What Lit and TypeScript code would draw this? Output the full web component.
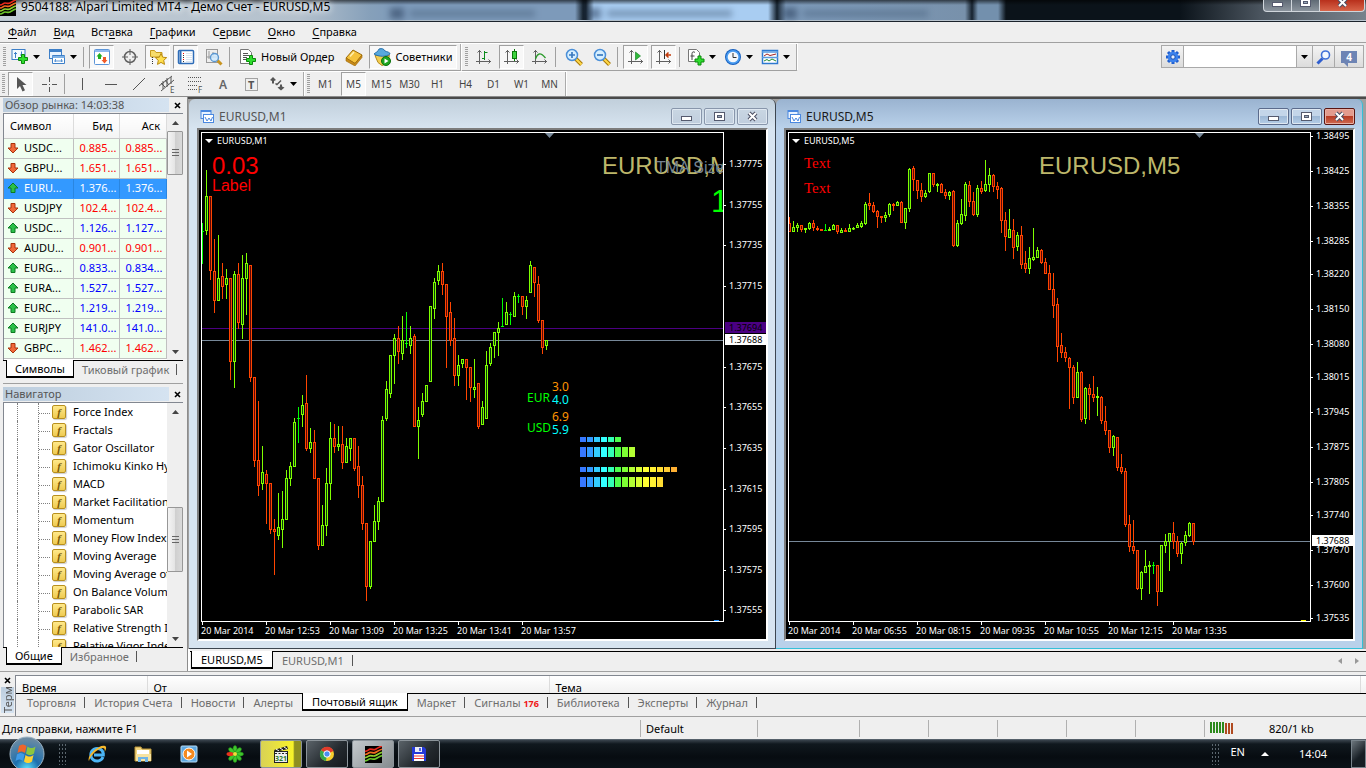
import { LitElement, html, svg, css } from "lit";
import { customElement, property } from "lit/decorators.js";
import { classMap } from "lit/directives/class-map.js";
import { styleMap } from "lit/directives/style-map.js";

/* [kind, high, body top, body bottom, low]; g = rising, r = falling, d = doji.
   Rows are measured from the top of the page frame, PANE_TOP is the pane's first row. */
type Candle = [string, number, number, number, number];
const PANE_TOP = 132;

const M1: Candle[] = [
  ["d",223,231,231,264],["g",170,196,231,235],["r",196,196,271,280],["r",239,271,301,313],["g",235,278,301,301],
  ["r",263,276,287,299],["g",269,278,285,299],["r",278,278,362,380],["g",271,274,362,388],["r",263,274,323,329],
  ["g",255,278,325,339],["g",253,263,279,315],["r",265,265,378,382],["r",377,377,461,467],["r",401,460,486,496],
  ["g",446,472,484,490],["r",470,474,484,524],["r",483,483,530,534],["r",519,529,532,575],["g",493,527,536,540],
  ["g",491,519,530,548],["g",470,478,520,520],["g",462,466,479,486],["g",418,422,467,467],["d",407,418,418,443],
  ["g",395,405,415,427],["r",375,403,449,451],["g",428,442,449,453],["r",430,442,479,479],["r",478,478,546,550],
  ["g",505,525,546,546],["g",468,483,526,536],["g",422,438,484,500],["r",424,438,447,453],["g",426,444,447,451],
  ["r",426,444,463,469],["g",438,446,463,463],["g",438,438,449,461],["r",438,438,469,471],["r",446,466,486,498],
  ["r",476,485,524,530],["r",523,523,587,601],["g",541,541,587,589],["g",505,521,542,542],["g",497,501,522,530],
  ["g",416,420,502,502],["g",381,389,419,421],["g",355,355,394,398],["g",334,338,356,384],["r",326,338,352,364],
  ["g",316,340,354,360],["d",312,343,343,348],["g",326,338,346,354],["r",334,336,427,427],["g",407,420,427,459],
  ["g",393,401,415,417],["g",385,385,402,402],["g",306,306,382,382],["g",278,282,309,319],["g",265,271,281,285],
  ["r",263,271,285,295],["r",284,284,317,368],["r",302,312,341,346],["r",318,338,376,386],["g",355,365,376,386],
  ["g",359,359,364,368],["r",359,359,368,400],["r",367,367,388,402],["g",359,387,390,398],["r",383,383,427,429],
  ["g",401,407,425,425],["g",351,365,419,419],["g",343,347,364,366],["g",332,332,346,358],["g",322,328,333,356],
  ["d",298,326,326,327],["g",302,312,325,325],["d",312,314,314,325],["g",292,296,317,317],["d",294,296,296,303],
  ["r",296,296,307,315],["g",296,300,307,319],["g",261,265,293,293],["r",267,267,283,297],["r",276,284,321,323],
  ["r",320,320,348,354],["g",340,340,346,350],
];

const M5: Candle[] = [
  ["r",217,223,232,232],["g",221,227,232,232],["g",223,225,228,232],["r",225,225,230,232],["g",228,228,230,233],
  ["g",222,223,229,230],["r",220,223,228,231],["r",226,228,230,231],["r",229,229,231,231],["d",224,230,230,231],
  ["g",227,229,231,231],["g",224,225,230,230],["r",225,225,232,234],["g",228,230,233,233],["r",228,230,232,232],
  ["g",224,228,232,232],["g",227,228,229,230],["g",223,225,228,228],["g",221,223,227,228],["g",202,204,224,225],
  ["r",193,203,206,210],["r",202,205,212,213],["r",210,211,217,228],["r",216,216,218,223],["g",212,215,218,222],
  ["g",203,204,215,217],["r",203,204,206,211],["g",201,202,206,206],["r",201,202,223,223],["g",208,208,223,229],
  ["g",168,169,209,212],["r",166,168,180,191],["r",180,180,191,199],["r",183,190,197,202],["g",190,193,197,198],
  ["g",173,173,192,193],["r",173,173,185,187],["g",183,184,186,192],["r",183,184,193,193],["r",189,192,196,199],
  ["g",191,192,196,200],["r",190,191,246,247],["g",220,223,246,247],["g",199,214,224,225],["g",182,184,216,221],
  ["r",181,185,202,207],["r",192,201,215,216],["g",185,188,215,217],["r",181,188,192,194],["g",160,184,191,192],
  ["g",168,175,185,192],["r",174,175,187,192],["r",182,186,190,199],["r",187,188,221,233],["r",212,220,237,251],
  ["g",209,229,238,238],["r",219,230,248,259],["g",232,235,247,251],["r",226,235,265,269],["r",251,263,269,273],
  ["g",247,258,269,274],["g",228,257,260,261],["g",247,250,258,258],["r",249,250,263,264],["r",258,262,274,274],
  ["r",265,273,290,290],["r",273,289,306,318],["r",298,304,347,362],["r",333,345,353,358],["r",347,352,358,362],
  ["r",357,358,368,409],["r",365,367,398,404],["g",362,372,398,398],["r",371,372,420,422],["g",387,388,419,424],
  ["r",384,388,395,420],["r",376,394,398,402],["g",387,396,398,416],["r",396,397,421,424],["r",406,421,431,435],
  ["r",430,430,448,453],["g",435,436,448,456],["r",437,437,468,471],["r",454,467,472,474],["r",468,471,525,527],
  ["r",515,524,547,552],["r",520,546,551,554],["r",550,550,589,590],["g",571,572,589,600],["g",550,566,573,573],
  ["g",561,565,567,594],["d",562,565,565,574],["r",565,565,592,606],["g",545,545,592,592],["g",534,541,546,553],
  ["g",533,533,542,571],["r",522,533,542,549],["r",536,541,554,557],["g",542,543,554,564],["g",531,535,543,546],
  ["g",522,523,536,537],["r",523,523,542,545],
];

const RAMP = ["#3778ff","#3399ff","#33ccff","#33ffff","#33ffb4","#4dff4d","#7dff33","#b4ff33","#d8ff33","#ffff33","#fff033","#ffdd33","#ffcc33","#ffb033"];

/* ---------- glyphs ---------- */
const icon = (body: unknown, w = 18, h = 18) =>
  html`<svg class="ico" width=${w} height=${h} viewBox="0 0 ${w} ${h}" aria-hidden="true">${body}</svg>`;
const plus = (x: number, y: number) => svg`<path transform="translate(${x} ${y})" d="M3.5 .5h3v3h3v3h-3v3h-3v-3h-3v-3h3z" fill="#2fdc2f" stroke="#0a8a0a"/>`;
const axes = svg`<path d="M4.500 2v14M1 13.500h15M2.500 4.500l2-2 2 2M13.500 11.500l2 2-2 2" fill="none" stroke="#606060"/>`;
const glass = svg`<path d="M10.500 10.500l6 6" stroke="#a87808" stroke-width="4"/><path d="M10.500 10.500l6 6" stroke="#ffd94a" stroke-width="2"/><circle cx="7" cy="7" r="5.500" fill="#d6efff" stroke="#4a8fd8" stroke-width="1.500"/>`;
const ICONS: Record<string, unknown> = {
  newChart: icon(svg`<rect x="1" y="1.500" width="13" height="10" fill="#f4faff" stroke="#3d7fc8"/><path d="M4.500 4v6M3 5.500h3M10.500 3.500v5M9 7h3" stroke="#3d7fc8"/>${plus(7,6)}`),
  profiles: icon(svg`<rect x="1.500" y="1.500" width="12" height="9" fill="#e8f3ff" stroke="#3d7fc8"/><path d="M1.500 3h12" stroke="#3d7fc8" stroke-width="2"/><path d="M4.500 7.500h12v8h-12z" fill="#fff" stroke="#3d7fc8"/><path d="M4.500 9h12" stroke="#7fb2e6" stroke-width="2"/><path d="M7.500 11v3M13.500 11v3M6 13h9" stroke="#5c97d6"/>`),
  market: icon(svg`<rect x="1.500" y="1.500" width="15" height="15" rx="1" fill="#fff" stroke="#5c95d8"/><path d="M2 3h14" stroke="#8fbaf0" stroke-width="2"/><path d="M6.500 5l3 3.500H8V11H5V8.500H3.500z" fill="#1fae1f"/><path d="M11.500 15.500l3-3.500H13V9h-3v3H8.500z" fill="#f05a28"/>`),
  target: icon(svg`<g fill="none" stroke="#606060"><circle cx="9" cy="9" r="5.500" stroke-width="1.500"/><path d="M9 1v6M9 11v6M1 9h6M11 9h6" /></g>`),
  star: icon(svg`<path d="M1.500 8V2.500h4l1.500 2h6V9h-11z" fill="#f7dc6a" stroke="#c79a1c"/><path d="M3.500 9v7" stroke="#333" stroke-dasharray="1 1"/><path d="M12 5.500l1.700 3.700 4 .4-3 2.800.8 4-3.500-2-3.500 2 .8-4-3-2.800 4-.4z" fill="#ffdf4d" stroke="#b98a10"/>`),
  terminal: icon(svg`<rect x="1.500" y="2.500" width="15" height="13" rx="1" fill="#fff" stroke="#2d6cb8" stroke-width="1.500"/><path d="M3.500 3v12" stroke="#2d6cb8" stroke-width="2"/><path d="M6 5.500h1M6 11.500h1" stroke="red" stroke-width="1"/><path d="M6 7.500h1M6 9.500h1M6 13.500h1" stroke="#333"/><path d="M9 5.500h6M9 7.500h6M9 9.500h6M9 11.500h6M9 13.500h6" stroke="#dbe6f2"/>`),
  tester: icon(svg`<rect x="1.500" y="1.500" width="11" height="13" fill="#eee" stroke="#999"/><path d="M4 3v8M8 4v6M2 9h10" stroke="#999"/><path d="M12 12l4.500 4.500" stroke="#c89420" stroke-width="3"/><circle cx="9.500" cy="9.500" r="4" fill="#cfeaff" fill-opacity=".85" stroke="#5a96d0" stroke-width="1.300"/>`),
  order: icon(svg`<path d="M2.500 1.500h8l3 3v11h-11z" fill="#fff" stroke="#777"/><path d="M5 5.500h5M5 7.500h6M5 9.500h4M5 11.500h3" stroke="#555"/>${plus(8,7)}`),
  book: icon(svg`<path d="M1 10l7-8 9 5-7 8.500z" fill="#f5c23c" stroke="#9c6a08"/><path d="M1 10l9 5.500 7-8.500v2.500L10 18l-9-5z" fill="#c98a17" stroke="#9c6a08" stroke-width=".6"/><path d="M5 8.500l4-4.500" stroke="#fff0b0" stroke-width="1.500"/>`),
  experts: icon(svg`<path d="M2 7.500l3 7 4 3 5-2 2.500-8z" fill="#f4cd50" stroke="#b28a1c"/><path d="M1 6c2-2 4-2 5-5 3-1 5 0 6 2 2 1 5 1 5 3-4 3-11 3-16 0z" fill="#58a8dc" stroke="#2a72ac"/><circle cx="13" cy="13" r="4.500" fill="#1ea51e" stroke="#0c700c"/><path d="M11.500 10.500v5l4-2.500z" fill="#fff"/>`),
  bars: icon(svg`${axes}<path d="M9.500 3v9M9.500 4.500h3M7 10.500h2.500" stroke="#0a8a1a" fill="none"/>`),
  candles: icon(svg`${axes}<path d="M11.500 1v12" stroke="#0a7a0a"/><rect x="9.500" y="3.500" width="4" height="7" fill="#3ed43e" stroke="#0a7a0a"/>`),
  line: icon(svg`${axes}<path d="M4.500 11c2-6 5-7 10-1" fill="none" stroke="#2a9a2a" stroke-width="1.300"/>`),
  zoomIn: icon(svg`${glass}<path d="M4 7h6M7 4v6" stroke="#3a7ac0" stroke-width="1.700"/>`),
  zoomOut: icon(svg`${glass}<path d="M4 7h6" stroke="#3a7ac0" stroke-width="1.700"/>`),
  scroll: icon(svg`${axes}<path d="M8.500 4v8l5-4z" fill="#2fb83a" stroke="#0a7a1a" stroke-width=".6"/>`),
  shift: icon(svg`${axes}<path d="M9.500 2v9" stroke="#333"/><path d="M11 7h5M13.500 4.500L11 7l2.500 2.500" fill="none" stroke="#c23a0a" stroke-width="1.500"/>`),
  indicators: icon(svg`<path d="M1.500 1.500h8l3 3v9h-11z" fill="#fff" stroke="#777"/><path d="M5 12V5.500c0-2 2-2 3-1M3.500 8h4" stroke="#444" fill="none"/>${plus(7.500,7.500)}`),
  clock: icon(svg`<circle cx="9" cy="9" r="8" fill="#1660c0"/><circle cx="9" cy="9" r="7" fill="#4a9cf0"/><circle cx="9" cy="9" r="5.300" fill="#f4f8fc"/><path d="M9 5v4.500h3.500" fill="none" stroke="#333"/>`),
  template: icon(svg`<rect x="1.500" y="2.500" width="15" height="13" fill="#fff" stroke="#2d78d0" stroke-width="1.500"/><path d="M1 4h16M1 9.500h16" stroke="#5a9ae0" stroke-width="1.500"/><path d="M3 8l3-2 3 1.500L15 6" stroke="#a02020" fill="none"/><path d="M3 13l3-1.500 2 1.500 3-2 4 2" stroke="#208a30" fill="none"/>`),
  cursor: icon(svg`<path d="M5 2v12l3-3 2.500 5.500 2.500-1.200-2.500-5.300h4z" fill="#555"/>`),
  cross: icon(svg`<path d="M9.500 2v5M9.500 12v5M2 9.500h5M12 9.500h5M9.500 9v1" stroke="#555"/>`),
  vline: icon(svg`<path d="M8.500 3v12" stroke="#555"/>`),
  hline: icon(svg`<path d="M3 9.500h12" stroke="#555"/>`),
  trend: icon(svg`<path d="M3 15L15 3" stroke="#555"/>`),
  channel: icon(svg`<path d="M1 11L14 1M3 16L16 5M5 6v8M9 3v9M13 2v7M3 8l4 4M7 5l4 5" stroke="#555" fill="none"/><text x="12" y="18" font-size="8" fill="#555">E</text>`),
  fibo: icon(svg`<path d="M2 2.500h14M2 6.500h14M2 10.500h9M2 14.500h9" stroke="#555" stroke-dasharray="1 1"/><text x="12" y="18" font-size="8" fill="#555">F</text>`),
  textA: icon(svg`<text x="5" y="14" font-size="12" font-weight="600" fill="#666">A</text>`),
  textT: icon(svg`<rect x="3.500" y="3.500" width="12" height="12" fill="none" stroke="#555" stroke-dasharray="1 1"/><text x="6" y="14" font-size="11" font-weight="700" fill="#555">T</text>`),
  arrows: icon(svg`<path d="M5 2l3 3-2 1v2.500H4V6L2 5zM7 9l2 1.500L13.500 6l-1-1L9 8.500 8 8z" fill="#555"/><path d="M13 15.500l-3.500-3 2.500-1V9.500h2v2l2.500 1z" fill="#555"/>`),
  gear: icon(svg`<g stroke="#1f5fd0" stroke-width="3"><path d="M9 2v14M2 9h14M4 4l10 10M14 4L4 14"/></g><circle cx="9" cy="9" r="5.200" fill="#3b82ee"/><circle cx="9" cy="9" r="2.200" fill="#e8f1ff" stroke="#174db0"/>`, 18, 18),
  find: icon(svg`<path d="M1.500 14.500l5-5" stroke="#2f5fd0" stroke-width="3"/><circle cx="9.500" cy="6" r="4" fill="#f2f7ff" stroke="#3f6fd8" stroke-width="1.600"/>`, 16, 16),
  chart: icon(svg`<rect x="1" y="1.500" width="10" height="8" fill="#e8f2ff" stroke="#4a88e0"/><path d="M1 2h10" stroke="#4a88e0" stroke-width="2"/><rect x="3.500" y="5.500" width="10" height="8" fill="#fff" stroke="#4a88e0"/><path d="M5 8l2 4 2-3 2 3 1.500-4" stroke="#4a88e0" fill="none"/>`, 15, 15),
  min: icon(svg`<rect x=".5" y="5.500" width="10" height="4" fill="#fff" stroke="#555a6e"/>`, 11, 11),
  max: icon(svg`<rect x=".5" y="1.500" width="10" height="8" fill="#fff" stroke="#555a6e"/><rect x="3.500" y="4.500" width="4" height="2" fill="#9ab" stroke="#555a6e"/>`, 11, 11),
  close: icon(svg`<path d="M2 2l7 7M9 2L2 9" stroke="#4b4f63" stroke-width="4"/><path d="M2 2l7 7M9 2L2 9" stroke="#fff" stroke-width="2"/>`, 11, 11),
  x: icon(svg`<path d="M1 1l5 5M6 1L1 6" stroke="#000" stroke-width="1.600"/>`, 7, 7),
};
const caret = html`<svg class="caret" width="7" height="4" viewBox="0 0 7 4"><path d="M0 0h7L3.500 4z" fill="#000"/></svg>`;
const dir = (up: boolean) => html`<svg width="12" height="12" viewBox="0 0 12 12"><path transform=${up ? "" : "rotate(180 6 6)"} d="M6 1l5 5H8v4.500H4V6H1z" fill=${up ? "#2bc04a" : "#f0693a"} stroke=${up ? "#0c7a22" : "#a8330c"}/></svg>`;
const alpari = (s: number) => html`<svg width=${s} height=${s} viewBox="0 0 16 16"><rect width="16" height="16" fill="#000"/><g fill="none" stroke-width="1.600"><path d="M0 5c3 0 3-2 5-2s3 1 5 0 3-2 6-3" stroke="#e8281c"/><path d="M0 8c3 0 3-2 5-2s3 1 5 0 3-2 6-3" stroke="#f06a1e"/><path d="M0 11c3 0 3-2 5-2s3 1 5 0 3-2 6-3" stroke="#8ed02c"/><path d="M0 14c3 0 3-2 5-2s3 1 5 0 3-2 6-3" stroke="#6cc72a"/></g></svg>`;

const shared = css`
  :host { box-sizing: border-box; }
  *, *::before, *::after { box-sizing: border-box; }
  button, input { font: inherit; color: inherit; margin: 0; padding: 0; border: 0; background: none; border-radius: 0; outline: 0; }
  svg { display: block; flex: none; }
  a { color: inherit; text-decoration: none; }
`;

const bar = css`
  .sheets { display: flex; align-items: flex-start; border-top: 1px solid #000; white-space: nowrap; }
  .sheet { height: 17px; line-height: 17px; padding: 0 9px; color: #6d6d6d; position: relative; }
  .sheet::after { content: ""; position: absolute; right: 0; top: 3px; height: 11px; width: 1px; background: #555; }
  .sheet.on { background: #fff; color: #000; border: 1px solid #000; height: 18px; margin-top: -1px; border-width: 0 1px 2px 1px; }
  .sheet.on::after, .sheet.quiet::after { display: none; }
  .sheet b { color: #f01414; font-size: 9px; line-height: 9px; }
`;

@customElement("mt-scrollbar")
class MtScrollbar extends LitElement {
  @property({ type: Number }) before = 1;
  @property({ type: Number }) after = 1;
  @property({ type: Number }) size = 40;
  static styles = [shared, css`
    :host { display: flex; flex-direction: column; width: 16px; background: #efefef; }
    .end { height: 17px; display: grid; place-items: center; }
    .thumb { border: 1px solid #979797; border-radius: 1px; background: linear-gradient(90deg, #f4f4f4, #e4e4e4 50%, #cfcfcf 51%, #dadada); display: grid; place-items: center; }
  `];
  render() {
    return html`
      <button class="end" aria-label="Вверх"><svg width="7" height="4"><path d="M0 4h7L3.500 0z" fill="#444"/></svg></button>
      <div style=${styleMap({ flexGrow: String(this.before) })}></div>
      <div class="thumb" style=${styleMap({ height: this.size + "px" })}><svg width="7" height="8"><path d="M0 .5h7M0 3.500h7M0 6.500h7" stroke="#666"/></svg></div>
      <div style=${styleMap({ flexGrow: String(this.after) })}></div>
      <button class="end" aria-label="Вниз"><svg width="7" height="4"><path d="M0 0h7L3.500 4z" fill="#444"/></svg></button>`;
  }
}

@customElement("mt-chart")
class MtChart extends LitElement {
  @property() name = "";
  @property({ type: Boolean }) active = false;
  @property({ attribute: false }) candles: Candle[] = [];
  @property({ attribute: false }) prices: [string, number][] = [];
  @property({ attribute: false }) times: string[] = [];
  @property({ attribute: false }) lines: [number, string, string, string, string][] = [];
  @property({ type: Number }) marker = 0;
  @property({ attribute: false }) overlay: unknown = null;
  static styles = [shared, css`
    :host { display: flex; flex-direction: column; flex: 1 1 0; min-width: 0; padding: 0 7px 7px 8px; border-radius: 6px 6px 0 0; border: 1px solid #3d4650; border-width: 0 1px 1px 0; background: linear-gradient(#c1cfdb, #d7e4f0 29px); }
    :host([active]) { background: linear-gradient(#9ab3d0, #b9d1ea 29px); border-color: #35c0d8; }
    .head { height: 29px; display: flex; align-items: center; gap: 4px; padding: 6px 0 0 3px; flex: none; color: #555; }
    :host([active]) .head { color: #1a1a1a; }
    .head h2 { font: inherit; margin: 0; flex: 1; }
    .ctl { display: flex; gap: 2px; }
    .ctl button { width: 31px; height: 17px; border: 1px solid #8896ab; border-radius: 2px; display: grid; place-items: center; background: linear-gradient(#c9d6e3, #c0cedd); box-shadow: inset 0 0 0 1px #dfe8f1; }
    :host([active]) .ctl button { border-color: #5b6b8c; background: linear-gradient(#c3d5e9 50%, #9db8d6 50%, #b5cde6); }
    :host([active]) .ctl button.x { border-color: #5a1512; background: linear-gradient(#e39b8e 45%, #b93c25 50%, #cf6a50); box-shadow: inset 0 0 0 1px #e8b0a4; }
    .client { flex: 1; min-height: 0; border: 2px solid; border-color: #7d7d7d #fff #fff #7d7d7d; background: #000; display: grid; grid-template: 1fr 17px / 1fr 42px; padding: 2px 0 0 2px; font-size: 9px; color: #fff; }
    .plot { border: 1px solid #fff; overflow: hidden; min-width: 0; min-height: 0; }
    .client svg { width: 100%; height: 100%; }
    .axis, .time, .plot { display: grid; min-width: 0; min-height: 0; }
    .axis svg, .time svg { overflow: visible; }
    .time { grid-column: 1 / 3; }
    text { fill: #fff; }
    .g { stroke: #7fff00; fill: #0a3c0a; }
    .r { stroke: #ff4500; fill: #5a0808; }
    .d { stroke: #00ff00; fill: none; }
  `];
  private candle([kind, high, top, bottom, low]: Candle, i: number) {
    const x = i * 4 + 0.5, at = (v: number) => v - PANE_TOP - 1;
    if (kind === "d") return svg`<path class="d" d="M${x} ${at(high)}V${at(low)}M${x - 1.5} ${at(top) + 0.5}h3"/>`;
    return svg`<path class=${kind} d="M${x} ${at(high)}V${at(top)}M${x} ${at(bottom)}V${at(low)}"/>
      <rect class=${kind} x=${x - 1} y=${at(top) + 0.5} width="2" height=${Math.max(0.5, bottom - top - 1)}/>`;
  }
  render() {
    return html`
      <header class="head">${ICONS.chart}<h2>${this.name}</h2>
        <div class="ctl">
          <button aria-label="Свернуть">${ICONS.min}</button>
          <button aria-label="Развернуть">${ICONS.max}</button>
          <button class="x" aria-label="Закрыть">${ICONS.close}</button>
        </div>
      </header>
      <div class="client">
        <div class="plot"><svg>
          ${this.lines.map(([y, c]) => svg`<path d="M0 ${y - PANE_TOP - 0.5}h3000" stroke=${c}/>`)}
          ${this.candles.map((c, i) => this.candle(c, i))}
          <path d="M3 6h8l-4 4z" fill="#fff"/>
          <text x="15" y="11" font-size="9">${this.name}</text>
          <path d="M${this.marker} 0h9l-4.500 5z" fill="#778899"/>
          ${this.overlay}
        </svg></div>
        <div class="axis"><svg>
          ${this.prices.map(([t, y]) => svg`<path d="M0 ${y - PANE_TOP + 0.5}h2" stroke="#fff"/><text x="5" y=${y - PANE_TOP + 3}>${t}</text>`)}
          ${this.lines.map(([y, , bg, fg, t]) => svg`<rect y=${y - PANE_TOP - 6} x="1" width="41" height="11" fill=${bg}/><text x="5" y=${y - PANE_TOP + 3} style="fill:${fg}">${t}</text>`)}
        </svg></div>
        <div class="time"><svg>
          ${this.times.map((t, i) => svg`<path d="M${1.5 + i * 64} 0v3" stroke="#fff"/><text x=${i * 64} y="12">${t}</text>`)}
        </svg></div>
      </div>`;
  }
}

const meter = (x: number, y: number, h: number, n: number) =>
  RAMP.slice(0, n).map((c, i) => svg`<rect x=${x + i * 7} y=${y} width="6" height=${h} fill=${c}/>`);

const overlayM1 = svg`
  <text x="10" y="41" font-family="Liberation Sans" font-size="24" style="fill:#f00">0.03</text>
  <text x="10" y="58" font-family="Liberation Sans" font-size="16" style="fill:#f00">Label</text>
  <text x="400" y="41" font-family="Liberation Sans" font-size="24" style="fill:#bdb76b">EURUSD,M1</text>
  <text x="454" y="40" font-family="Liberation Sans" font-size="16" style="fill:#708090">TMA Size</text>
  <text x="509" y="79" font-family="Liberation Sans" font-size="32" style="fill:#0f0">1</text>
  <text x="325" y="269" font-size="12" style="fill:#0f0">EUR</text><text x="350" y="258" font-size="12" style="fill:#ff9500">3.0</text><text x="350" y="271" font-size="12" style="fill:#0ff">4.0</text>
  <text x="325" y="299" font-size="12" style="fill:#0f0">USD</text><text x="350" y="288" font-size="12" style="fill:#ff9500">6.9</text><text x="350" y="301" font-size="12" style="fill:#0ff">5.9</text>
  ${meter(378, 304, 5, 6)}${meter(378, 314, 10, 8)}${meter(378, 334, 5, 14)}${meter(378, 344, 10, 12)}
  <path d="M512 487.500h5" stroke="#1e90ff"/>`;
const overlayM5 = svg`
  <text x="15" y="35" font-family="Liberation Serif" font-size="15" style="fill:#f00">Text</text>
  <text x="15" y="60" font-family="Liberation Serif" font-size="15" style="fill:#f00">Text</text>
  <text x="250" y="41" font-family="Liberation Sans" font-size="24" style="fill:#bdb76b">EURUSD,M5</text>
  <path d="M512 487.500h5" stroke="#ff0"/>`;

const QUOTES: [string, string, string, boolean][] = [
  ["USDC...", "0.885...", "0.885...", false], ["GBPU...", "1.651...", "1.651...", false], ["EURU...", "1.376...", "1.376...", true],
  ["USDJPY", "102.4...", "102.4...", false], ["USDC...", "1.126...", "1.127...", true], ["AUDU...", "0.901...", "0.901...", false],
  ["EURG...", "0.833...", "0.834...", true], ["EURA...", "1.527...", "1.527...", true], ["EURC...", "1.219...", "1.219...", true],
  ["EURJPY", "141.0...", "141.0...", true], ["GBPC...", "1.462...", "1.462...", false],
];
const TREE = ["Force Index", "Fractals", "Gator Oscillator", "Ichimoku Kinko Hyo", "MACD", "Market Facilitation Index", "Momentum",
  "Money Flow Index", "Moving Average", "Moving Average of Oscillator", "On Balance Volume", "Parabolic SAR", "Relative Strength Index", "Relative Vigor Index"];
const zip = (labels: string[], ys: number[]): [string, number][] => labels.map((l, i) => [l, ys[i]]);
const P1 = zip(["1.37775","1.37755","1.37735","1.37715","1.37675","1.37655","1.37635","1.37615","1.37595","1.37575","1.37555"],
  [164,205,245,286,367,407,448,489,529,570,610]);
const P5 = zip(["1.38495","1.38425","1.38355","1.38285","1.38220","1.38150","1.38080","1.38015","1.37945","1.37875","1.37805","1.37740","1.37670","1.37600","1.37535"],
  [136,171,206,241,274,309,344,377,412,447,482,515,550,585,618]);
const T1 = ["20 Mar 2014","20 Mar 12:53","20 Mar 13:09","20 Mar 13:25","20 Mar 13:41","20 Mar 13:57"];
const T5 = ["20 Mar 2014","20 Mar 06:55","20 Mar 08:15","20 Mar 09:35","20 Mar 10:55","20 Mar 12:15","20 Mar 13:35"];

@customElement("app-root")
class AppRoot extends LitElement {
  static styles = [shared, bar, css`
    :host { display: flex; flex-direction: column; height: 100vh; overflow: hidden; background: #efefef; color: #000; font: 11px/14px "Noto Sans", "Open Sans", sans-serif; }
    mt-chart { font-size: 12px; }

    .title { height: 22px; flex: none; display: flex; align-items: flex-start; position: relative; border-bottom: 1px solid #1b232c; box-shadow: inset 0 -1px #b9c4ce; overflow: hidden;
      background: linear-gradient(#0009, #0000 5px), linear-gradient(90deg, #c3cdd6 0, #b4c1cd 300px, #86a0ba 370px, #7d9aba 400px, #7d9aba 575px, #16222e 583px, #16222e 586px, #a9cdf2 594px, #a9cdf2 768px, #16222e 777px, #7d9aba 786px, #7891ab 965px, #16222e 972px, #7390ad 978px, #7390ad 998px, #0b131a 1006px, #0b131a 1180px, #4a545e 1260px, #78828c 100%); }
    .ghosts { position: absolute; left: 390px; top: 8px; width: 590px; display: flex; justify-content: space-between; filter: blur(3px); opacity: .5; }
    .ghosts i { width: 14px; height: 11px; background: #1f3350; margin-right: 6px; }
    .ghosts span { width: 125px; height: 7px; margin: 2px auto 0 0; background: #4a6480; }
    .title h1 { font: 12px/14px "Noto Sans", sans-serif; margin: 0; padding-left: 5px; flex: 1; text-shadow: 0 0 6px #fff, 0 0 8px #fff; white-space: nowrap; position: relative; }
    .wctl { display: flex; margin-right: 1px; position: relative; }
    .wctl button { height: 12px; width: 29px; border: 1px solid #d0d6dc; border-top: 0; background: linear-gradient(#5f6a75, #8b949d); display: flex; align-items: flex-end; justify-content: center; padding-bottom: 3px; margin-left: -1px; overflow: hidden; }
    .wctl button:first-child { border-radius: 0 0 0 4px; }
    .wctl .x { width: 46px; background: linear-gradient(#b8301c, #d8654a); border-radius: 0 0 4px 0; }

    .menu { height: 21px; flex: none; display: flex; gap: 17px; align-items: center; padding-left: 8px; border-bottom: 1px solid #a0a0a0; }
    .menu u { text-underline-offset: 2px; }
    .bars { display: flex; flex: none; }
    .bars.one { height: 28px; }
    .bars.two { height: 26px; border-bottom: 1px solid #8c8c8c; }
    .group { display: flex; padding: 1px 0 0 3px; border-right: 2px groove #fff; border-bottom: 1px solid #a0a0a0; border-top: 1px solid #fff; height: 28px; }
    .two .group { border-bottom: 0; height: 25px; padding: 0 0 0 2px; }
    .grip { width: 3px; height: 20px; margin: 2px 3px 0 0; background: repeating-linear-gradient(#a0a0a0 0 1px, #efefef 1px 2px); }
    .b { width: 25px; height: 24px; margin-right: 3px; display: flex; align-items: center; justify-content: center; white-space: nowrap; }
    .on.b { background: #f8f8f8; border: 1px solid; border-color: #a0a0a0 #fff #fff #a0a0a0; }
    .b.drop { width: 34px; gap: 4px; justify-content: flex-start; padding-left: 2px; }
    .b.order { width: 103px; justify-content: flex-start; gap: 5px; padding-left: 3px; }
    .b.ea { width: 88px; gap: 4px; }
    .b.tf { color: #444; font-size: 10px; }
    .rule { width: 2px; height: 20px; border-left: 1px solid #a0a0a0; margin: 2px 4px 0 0; }
    .grow { flex: 1; }
    .seek { display: flex; height: 23px; margin: 2px 2px 0 0; border: 1px solid #a9a9a9; background: #a9a9a9; gap: 1px; }
    .seek > button { background: linear-gradient(#f4f4f4, #dcdcdc); display: grid; place-items: center; width: 21px; }
    .seek input { width: 112px; background: #fff; padding: 0 3px; }
    .seek .dd { width: 15px; }
    .seek .chat { width: 28px; }
    .bubble { background: #6d84b4; color: #fff; font-weight: 700; font-size: 10px; line-height: 12px; width: 16px; height: 12px; position: relative; }
    .bubble::after { content: ""; position: absolute; left: 3px; top: 12px; border: 2px solid #0000; border-top-color: #6d84b4; border-right-color: #6d84b4; }

    .main { flex: 1; min-height: 0; display: flex; }
    .dock { width: 188px; flex: none; display: flex; flex-direction: column; border-right: 1px solid #8c8c8c; padding: 0 4px 0 3px; }
    .panel { display: flex; flex-direction: column; min-height: 0; border-bottom: 1px solid #a0a0a0; padding-bottom: 5px; }
    .panel.nav { flex: 1; padding: 2px 0 6px; border-bottom: 0; }
    .cap { height: 16px; display: flex; align-items: center; flex: none; color: #555; }
    .cap h3 { font: inherit; margin: 0; width: 166px; line-height: 14px; padding-left: 2px; background: linear-gradient(90deg, #bccddd, #d5e3f1); }
    .cap button { width: 11px; height: 11px; margin-left: auto; display: grid; place-items: center; }
    .view { display: flex; border: 1px solid #828790; border-width: 1px 0 0 1px; background: #fff; overflow: hidden; }
    .view mt-scrollbar { flex: none; }
    .market .view { height: 247px; }
    .quotes { flex: 1; border-collapse: collapse; table-layout: fixed; width: 163px; min-width: 0; align-self: flex-start; }
    .quotes th { height: 24px; font-weight: 400; text-align: right; padding: 0 6px; border-right: 1px solid #dcdcdc; background: linear-gradient(#fff, #f4f4f4); border-bottom: 1px solid #c8c8c8; }
    .quotes th:first-child { text-align: left; width: 69px; }
    .quotes th:nth-child(2) { width: 46px; }
    .quotes td { height: 20px; padding: 0 0 0 6px; border-right: 1px solid #c0c0c0; border-bottom: 1px solid #c0c0c0; background: #f0fff0; white-space: nowrap; overflow: hidden; line-height: 14px; }
    .quotes .sym { display: flex; align-items: center; gap: 5px; margin-left: -3px; }
    .quotes .up { color: #00f; }
    .quotes .down { color: #f00; }
    .quotes .sel td { background: #3399ff; color: #fff; border-color: #c0c0c0 #2a86e0 #3399ff; }
    .nav .view { flex: 1; min-height: 0; }
    .tree { flex: 1; min-width: 0; margin: 0; padding: 0 0 0 13px; list-style: none; overflow: hidden; }
    .tree li { height: 18px; display: flex; align-items: center; border-left: 1px dotted #808080; white-space: nowrap; padding-left: 20px; }
    .tree li::before { content: ""; width: 12px; height: 18px; flex: none; border-left: 1px dotted #808080; background: repeating-linear-gradient(90deg, #808080 0 1px, #0000 1px 2px) 0 10px / 100% 1px no-repeat; margin-right: 2px; }
    .fn { width: 14px; height: 14px; margin-right: 7px; border: 1px solid #b8901e; border-radius: 2px; background: linear-gradient(#ffe98a, #eecb52); box-shadow: 1px 1px 1px #0003; display: grid; place-items: center; font: italic 700 11px/11px "Liberation Serif", serif; color: #7a5a08; flex: none; }
    .dock .sheets { padding-left: 3px; }
    .dock .sheet { padding: 0 8px; }

    .work { flex: 1; min-width: 0; display: flex; flex-direction: column; }
    .desk { flex: 1; min-height: 0; display: flex; padding: 0 3px 0 1px; background: #a0a0a0; border-top: 2px solid #4a4a4a; }
    .docs { height: 22px; flex: none; display: flex; flex-direction: column; padding-top: 2px; background: #efefef; border-left: 2px solid #fff; position: relative; }
    .docs .sheets { padding-left: 1px; }
    .docs nav { position: absolute; right: 7px; top: 9px; display: flex; gap: 13px; }

    .term { height: 46px; flex: none; display: grid; grid-template-columns: 15px 1fr; border-top: 1px solid #a0a0a0; border-bottom: 1px solid #a0a0a0; padding-top: 3px; overflow: hidden; }
    .spine { display: flex; flex-direction: column; align-items: center; gap: 3px; padding-top: 2px; overflow: hidden; color: #555; min-height: 0; }
    .spine span { writing-mode: vertical-rl; transform: rotate(180deg); background: linear-gradient(#d5e3f1, #bccddd); width: 13px; line-height: 13px; height: 26px; overflow: hidden; }
    .mail { display: flex; flex-direction: column; border: 1px solid #828790; border-width: 1px 0 0 1px; min-width: 0; }
    .mail table { border-collapse: collapse; width: 100%; table-layout: fixed; display: block; height: 17px; overflow: hidden; background: linear-gradient(#fff, #f1f1f1); }
    .mail th { font-weight: 400; text-align: left; padding: 0 0 0 6px; border-right: 1px solid #dcdcdc; height: 24px; }
    .c1 { width: 131px; } .c2 { width: 402px; } .c3 { width: 811px; }
    .mail .sheets { padding-left: 2px; }

    .status { height: 22px; flex: none; display: flex; align-items: center; padding-left: 2px; }
    .status > span { height: 17px; line-height: 17px; border-left: 1px solid #b0b0b0; padding-left: 5px; white-space: nowrap; flex: none; }
    .status > .hint { flex: 1; border: 0; padding: 0; }
    .s1 { width: 117px; } .s2 { width: 102px; } .s3 { width: 69px; }
    .status > .conn { display: flex; align-items: center; gap: 36px; width: 162px; }

    .task { height: 29px; flex: none; display: flex; align-items: center; color: #fff; background: linear-gradient(#39434c, #10181e 4px, #070c11 60%, #0a1218); border-top: 1px solid #55606a; position: relative; }
    .orb { position: absolute; left: 8px; top: -4px; width: 38px; height: 34px; }
    .dots { margin-left: 58px; width: 8px; height: 22px; background: radial-gradient(circle, #5b666e 0 .8px, #0000 1px) 0 0 / 3px 4px; }
    .pins { display: flex; gap: 22px; margin: 0 13px 0 19px; }
    .pins button { width: 24px; display: grid; place-items: center; }
    .apps { display: flex; gap: 4px; height: 100%; }
    .apps button { width: 42px; border: 1px solid #8c949a; border-radius: 2px; display: grid; place-items: center; background: linear-gradient(135deg, #5a6268, #23292e 60%, #15191d); }
    .apps .hot { background: linear-gradient(90deg, #d9d255, #f8f22a 80%, #8f8f20 84%); }
    .apps .cur { background: linear-gradient(135deg, #c4c9cc, #858b8f); }
    .tray { display: flex; align-items: center; height: 100%; margin-left: auto; }
    .tray .lang { margin: -4px 16px 0 11px; }
    .tray time { margin: 0 24px 0 30px; }
    .peek { width: 15px; height: 100%; border: 1px solid #79838b; background: linear-gradient(135deg, #6c757c, #171e24 60%); }
  `];

  private sheet(label: unknown, on = false, quiet = false) {
    return html`<button class=${classMap({ sheet: true, on, quiet })}>${label}</button>`;
  }
  private tool(id: string, label: string, cls = "") {
    return html`<button class="b ${cls}" title=${label} aria-label=${label}>${ICONS[id]}${cls.includes("drop") ? caret : null}</button>`;
  }

  render() {
    const rule = html`<span class="rule"></span>`, grip = html`<span class="grip"></span>`;
    return html`
      <header class="title"><div class="ghosts"><i></i><span></span><i></i><span></span><i></i><span></span></div>${alpari(16)}<h1>9504188: Alpari Limited MT4 - Демо Счет - EURUSD,M5</h1>
        <div class="wctl"><button aria-label="Свернуть">${ICONS.min}</button><button aria-label="Развернуть">${ICONS.max}</button><button class="x" aria-label="Закрыть">${ICONS.close}</button></div>
      </header>
      <nav class="menu">
        <a href="#"><u>Ф</u>айл</a><a href="#"><u>В</u>ид</a><a href="#">Вст<u>а</u>вка</a><a href="#"><u>Г</u>рафики</a><a href="#">С<u>е</u>рвис</a><a href="#"><u>О</u>кно</a><a href="#"><u>С</u>правка</a>
      </nav>
      <div class="bars one">
        <div class="group">${grip}
          ${this.tool("newChart", "Новый график", "drop")}${this.tool("profiles", "Профили", "drop")}${rule}
          ${this.tool("market", "Обзор рынка", "on")}${this.tool("target", "Окно данных")}${this.tool("star", "Навигатор", "on")}${this.tool("terminal", "Терминал", "on")}${this.tool("tester", "Тестер стратегий")}${rule}
          <button class="b order">${ICONS.order}Новый Ордер</button>${this.tool("book", "MetaEditor")}
          <button class="b ea on">${ICONS.experts}Советники</button>
        </div>
        <div class="group">${grip}
          ${this.tool("bars", "Бары")}${this.tool("candles", "Японские свечи", "on")}${this.tool("line", "Линия")}${rule}
          ${this.tool("zoomIn", "Увеличить")}${this.tool("zoomOut", "Уменьшить")}${rule}
          ${this.tool("scroll", "Автопрокрутка", "on")}${this.tool("shift", "Сдвиг графика", "on")}${rule}
          ${this.tool("indicators", "Индикаторы", "drop")}${this.tool("clock", "Периоды", "drop")}${this.tool("template", "Шаблоны", "drop")}
        </div>
        <div class="grow"></div>
        <div class="seek">
          <button aria-label="Настройки">${ICONS.gear}</button><input type="text" aria-label="Поиск"><button class="dd" aria-label="История">${caret}</button>
          <button aria-label="Найти">${ICONS.find}</button><button class="chat" aria-label="Сообщения"><span class="bubble">4</span></button>
        </div>
      </div>
      <div class="bars two">
        <div class="group">${grip}
          ${this.tool("cursor", "Курсор", "on")}${this.tool("cross", "Перекрестие")}${rule}
          ${this.tool("vline", "Вертикальная линия")}${this.tool("hline", "Горизонтальная линия")}${this.tool("trend", "Трендовая линия")}${this.tool("channel", "Канал")}${this.tool("fibo", "Фибоначчи")}${this.tool("textA", "Текст")}${this.tool("textT", "Метка")}${this.tool("arrows", "Стрелки", "drop")}
        </div>
        <div class="group">${grip}
          ${["M1", "M5", "M15", "M30", "H1", "H4", "D1", "W1", "MN"].map(t => html`<button class=${classMap({ b: true, tf: true, on: t === "M5" })}>${t}</button>`)}
        </div>
      </div>

      <div class="main">
        <aside class="dock">
          <section class="panel market">
            <div class="cap"><h3>Обзор рынка: 14:03:38</h3><button aria-label="Закрыть">${ICONS.x}</button></div>
            <div class="view">
              <table class="quotes">
                <thead><tr><th>Символ</th><th>Бид</th><th>Аск</th></tr></thead>
                <tbody>${QUOTES.map(([s, b, a, up], i) => {
                  const c = i === 2 ? "" : up ? "up" : "down";
                  return html`<tr class=${i === 2 ? "sel" : ""}><td><div class="sym">${dir(up)}${s}</div></td><td class=${c}>${b}</td><td class=${c}>${a}</td></tr>`;
                })}</tbody>
              </table>
              <mt-scrollbar .before=${0} .after=${1} .size=${44}></mt-scrollbar>
            </div>
            <div class="sheets">${this.sheet("Символы", true)}${this.sheet("Тиковый график")}</div>
          </section>
          <section class="panel nav">
            <div class="cap"><h3>Навигатор</h3><button aria-label="Закрыть">${ICONS.x}</button></div>
            <div class="view">
              <ul class="tree">${TREE.map(t => html`<li><i class="fn">f</i>${t}</li>`)}</ul>
              <mt-scrollbar .before=${87} .after=${58} .size=${65}></mt-scrollbar>
            </div>
            <div class="sheets">${this.sheet("Общие", true)}${this.sheet("Избранное")}</div>
          </section>
        </aside>
        <main class="work">
          <div class="desk">
            <mt-chart name="EURUSD,M1" .candles=${M1} .prices=${P1} .times=${T1} .marker=${343} .overlay=${overlayM1}
              .lines=${[[328, "#4b0082", "#4b0082", "#000", "1.37694"], [340, "#778899", "#fff", "#000", "1.37688"]]}></mt-chart>
            <mt-chart name="EURUSD,M5" active .candles=${M5} .prices=${P5} .times=${T5} .marker=${406} .overlay=${overlayM5}
              .lines=${[[541, "#778899", "#fff", "#000", "1.37688"]]}></mt-chart>
          </div>
          <div class="docs"><div class="sheets">${this.sheet("EURUSD,M5", true)}${this.sheet("EURUSD,M1")}</div>
            <nav><svg width="4" height="6"><path d="M4 0v6L0 3z" fill="#999"/></svg><svg width="4" height="6"><path d="M0 0v6l4-3z" fill="#999"/></svg></nav>
          </div>
        </main>
      </div>

      <section class="term">
        <div class="spine">${ICONS.x}<span>Терминал</span></div>
        <div class="mail">
          <table><thead><tr><th class="c1">Время</th><th class="c2">От</th><th class="c3">Тема</th></tr></thead></table>
          <div class="sheets">
            ${this.sheet("Торговля")}${this.sheet("История Счета")}${this.sheet("Новости")}${this.sheet("Алерты", false, true)}${this.sheet("Почтовый ящик", true)}${this.sheet("Маркет")}
            ${this.sheet(html`Сигналы <b>176</b>`)}${this.sheet("Библиотека")}${this.sheet("Эксперты")}${this.sheet("Журнал")}
          </div>
        </div>
      </section>

      <footer class="status">
        <span class="hint">Для справки, нажмите F1</span><span class="s1">Default</span><span class="s2"></span><span class="s3"></span><span class="s3"></span><span class="s3"></span><span class="s3"></span><span class="s3"></span>
        <span class="conn"><svg width="23" height="12">${Array.from({ length: 8 }, (_, i) => svg`<path d="M${1 + i * 3} ${i < 5 ? 0 : 1}v11" stroke=${i < 5 ? "#2c8a1c" : "#b04a20"} stroke-width="2"/>`)}</svg>820/1 kb</span>
      </footer>

      <div class="task">
        <button class="orb" aria-label="Пуск"><svg width="38" height="34" viewBox="0 0 38 34">
          <defs><radialGradient id="o" cx=".5" cy=".95" r=".9"><stop offset="0" stop-color="#5fe6ff"/><stop offset=".4" stop-color="#1d6fae"/><stop offset="1" stop-color="#6c8ba3"/></radialGradient></defs>
          <circle cx="19" cy="18" r="17" fill="url(#o)" stroke="#9db4c4"/>
          <path d="M11 10c3-2 5-2 7.500 0L17 17c-3-2-5-2-7.500 0z" fill="#f0652a"/><path d="M19.500 10.500c3 2 5 2 8 0L26 17.500c-3 2-5 2-8 0z" fill="#8cc63f"/>
          <path d="M9 18.500c3-2 5-2 7.500 0L15 25c-3-2-5-2-7.500 0z" fill="#3f9be8"/><path d="M17.500 19c3 2 5 2 8 0L24 25.500c-3 2-5 2-8 0z" fill="#fdd033"/></svg></button>
        <span class="dots"></span>
        <div class="pins">
          <button aria-label="Internet Explorer"><svg width="20" height="20" viewBox="0 0 20 20"><path d="M16 13a6.300 6.300 0 11.300-3.500v1.500H7" fill="none" stroke="#4cb4f4" stroke-width="3"/><path d="M2 17C-1 12 12 0 18 2c2 1 1 4-.5 6 1-4-1-5-5-3C7 8 3 13 2 17z" fill="#f7b92c"/></svg></button>
          <button aria-label="Проводник"><svg width="20" height="18" viewBox="0 0 20 18"><path d="M2 2h6l1 2h9v12H2z" fill="#f2d680" stroke="#b99438"/><path d="M4 5h12v4H4z" fill="#fff"/><path d="M3 9h15v7H3z" fill="#f7e3a1"/><path d="M5 17v-5h10v5h-3v-3H8v3z" fill="#6fb4e8"/></svg></button>
          <button aria-label="Media Player"><svg width="18" height="18" viewBox="0 0 18 18"><rect x="1" y="1" width="16" height="16" rx="1" fill="#5fa8e0" stroke="#b8dcf5"/><circle cx="9" cy="9" r="6" fill="#f58a1f" stroke="#fff"/><path d="M7 5.500v7l5-3.500z" fill="#fff"/></svg></button>
          <button aria-label="ICQ"><svg width="18" height="18" viewBox="0 0 18 18">${[0, 45, 90, 135, 180, 225, 315].map(a => svg`<ellipse transform="rotate(${a} 9 9)" cx="9" cy="4" rx="2" ry="3.500" fill="#3fc62c" stroke="#1c7a14" stroke-width=".5"/>`)}<ellipse transform="rotate(270 9 9)" cx="9" cy="4" rx="2" ry="3.500" fill="#e8331c"/><circle cx="9" cy="9" r="2" fill="#f2e03a"/></svg></button>
        </div>
        <div class="apps">
          <button class="hot" aria-label="Media Player Classic"><svg width="18" height="20" viewBox="0 0 18 20"><path d="M2 6l13-4 1 3L3 8z" fill="#222"/><path d="M4 5l3 2M8 4l3 2M12 3l3 2" stroke="#fff"/><rect x="2.500" y="7.500" width="13" height="11" fill="#eee" stroke="#222"/><path d="M3 9.500h12" stroke="#222" stroke-dasharray="2 1.500"/><text x="3" y="17" font-size="7" font-weight="700" fill="#2b7a2b">321</text></svg></button>
          <button aria-label="Chrome"><svg width="18" height="18" viewBox="0 0 18 18"><circle cx="9" cy="9" r="7" fill="#f7cf2d"/><path d="M9 9L3 5.300A7 7 0 0115.500 6z" fill="#e23b2c"/><path d="M9 9L3 5.300A7 7 0 008 16z" fill="#35a84a"/><circle cx="9" cy="9" r="3.200" fill="#4b8df0" stroke="#fff"/></svg></button>
          <button class="cur" aria-label="MetaTrader">${alpari(17)}</button>
          <button aria-label="Total Commander"><svg width="16" height="16" viewBox="0 0 16 16"><path d="M1 1h12l2 2v12H1z" fill="#2538d8"/><rect x="4" y="1" width="7" height="5" fill="#e8eaf6"/><path d="M9 2v3" stroke="#2538d8" stroke-width="1.500"/><rect x="3" y="8" width="10" height="7" fill="#fff"/><path d="M3 10h10M3 12.500h10" stroke="#e33"/></svg></button>
        </div>
        <div class="tray"><span class="dots"></span><span class="lang">EN</span><svg width="8" height="4"><path d="M0 4h8L4 0z" fill="#fff"/></svg><time>14:04</time><button class="peek" aria-label="Показать рабочий стол"></button></div>
      </div>`;
  }
}
